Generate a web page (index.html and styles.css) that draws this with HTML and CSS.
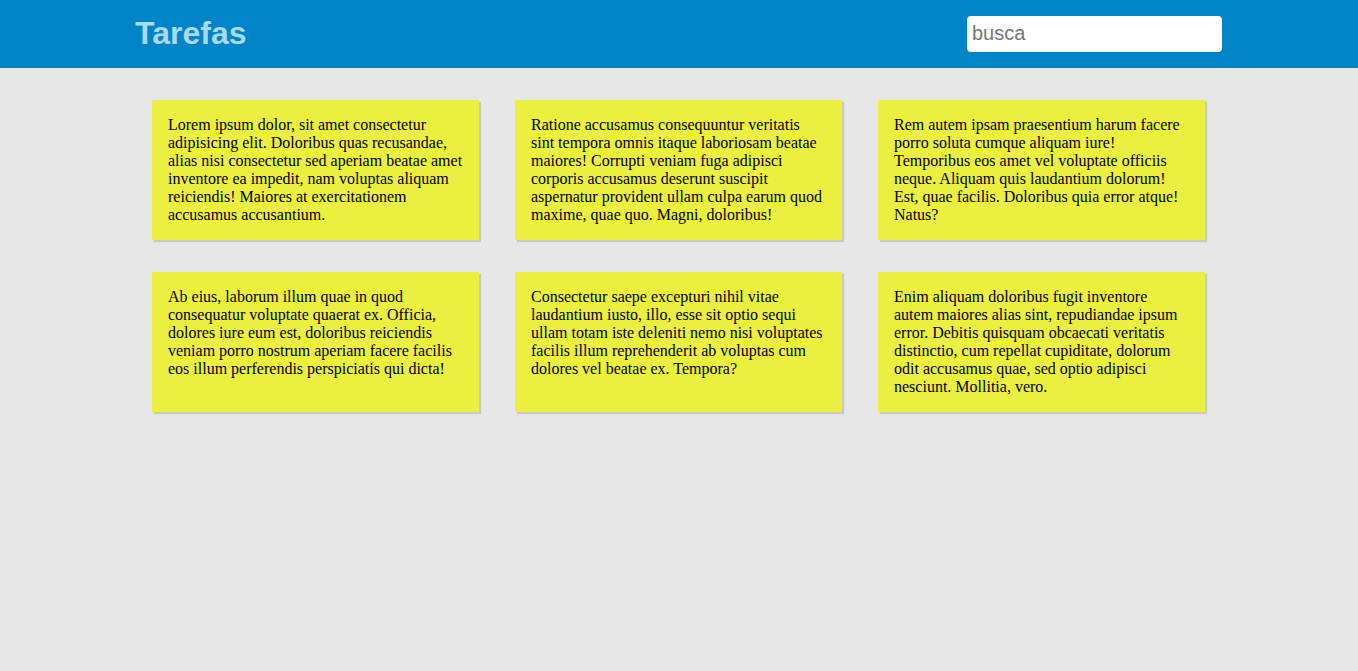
FILE: index.html
```html
<!DOCTYPE html>
<html lang="pt">
<head>
<meta charset="utf-8">
<title>Tarefas</title>
<link rel="stylesheet" href="styles.css">
</head>
<body>
<header class="topbar">
  <div class="topbar-inner">
    <h1 class="brand">Tarefas</h1>
    <input class="search" type="text" placeholder="busca">
  </div>
</header>
<main class="board">
  <div class="note">Lorem ipsum dolor, sit amet consectetur adipisicing elit. Doloribus quas recusandae, alias nisi consectetur sed aperiam beatae amet inventore ea impedit, nam voluptas aliquam reiciendis! Maiores at exercitationem accusamus accusantium.</div>
  <div class="note">Ratione accusamus consequuntur veritatis sint tempora omnis itaque laboriosam beatae maiores! Corrupti veniam fuga adipisci corporis accusamus deserunt suscipit aspernatur provident ullam culpa earum quod maxime, quae quo. Magni, doloribus!</div>
  <div class="note">Rem autem ipsam praesentium harum facere porro soluta cumque aliquam iure! Temporibus eos amet vel voluptate officiis neque. Aliquam quis laudantium dolorum! Est, quae facilis. Doloribus quia error atque! Natus?</div>
  <div class="note">Ab eius, laborum illum quae in quod consequatur voluptate quaerat ex. Officia, dolores iure eum est, doloribus reiciendis veniam porro nostrum aperiam facere facilis eos illum perferendis perspiciatis qui dicta!</div>
  <div class="note">Consectetur saepe excepturi nihil vitae laudantium iusto, illo, esse sit optio sequi ullam totam iste deleniti nemo nisi voluptates facilis illum reprehenderit ab voluptas cum dolores vel beatae ex. Tempora?</div>
  <div class="note">Enim aliquam doloribus fugit inventore autem maiores alias sint, repudiandae ipsum error. Debitis quisquam obcaecati veritatis distinctio, cum repellat cupiditate, dolorum odit accusamus quae, sed optio adipisci nesciunt. Mollitia, vero.</div>
</main>
</body>
</html>
```

FILE: styles.css
```css
html, body {
  margin: 0;
  padding: 0;
}
body {
  background: #e7e7e7;
  font-family: "Liberation Serif", "Times New Roman", serif;
  font-size: 16px;
  color: #000;
  min-height: 671px;
}
.topbar {
  background: #0084c7;
  height: 68px;
}
.topbar-inner {
  width: 1088px;
  margin: 0 auto;
  height: 68px;
  display: flex;
  align-items: center;
  justify-content: space-between;
}
.brand {
  margin: 0 0 2px;
  font-family: "Liberation Sans", Arial, sans-serif;
  font-weight: bold;
  font-size: 32px;
  color: #a9d8f1;
  line-height: 1;
}
.search {
  width: 255px;
  height: 36px;
  box-sizing: border-box;
  border: none;
  border-radius: 4px;
  padding: 0 5px;
  margin: 0 1px 1px 0;
  font-family: "Liberation Sans", Arial, sans-serif;
  font-size: 20px;
  color: #333;
  background: #fff;
  outline: none;
}
.search::placeholder {
  color: #757575;
}
.board {
  width: 1053px;
  margin: 32px 0 0 calc(50% - 527px);
  display: grid;
  grid-template-columns: repeat(3, 1fr);
  column-gap: 36px;
  row-gap: 32px;
}
.note {
  background: #ebef40;
  padding: 16px;
  line-height: 18px;
  box-shadow: 2px 2px 1px #c8c8c8;
}
```
